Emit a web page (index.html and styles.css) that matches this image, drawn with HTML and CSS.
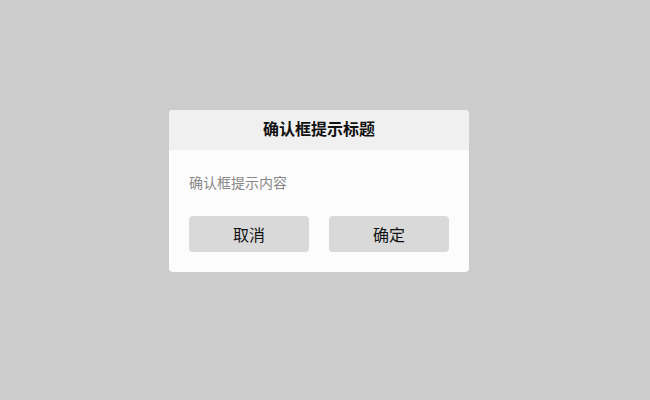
FILE: index.html
```html
<!DOCTYPE html>
<html lang="zh">
<head>
<meta charset="utf-8">
<link rel="stylesheet" href="styles.css">
</head>
<body>
<div class="overlay">
  <div class="dialog">
    <div class="dialog-header">确认框提示标题</div>
    <div class="dialog-body">
      <div class="dialog-content">确认框提示内容</div>
      <div class="dialog-actions">
        <button class="btn">取消</button>
        <button class="btn">确定</button>
      </div>
    </div>
  </div>
</div>
</body>
</html>
```
FILE: styles.css
```css
html, body {
  margin: 0;
  padding: 0;
  height: 100%;
}
body {
  background: #cccccc;
  font-family: "Liberation Sans", "Noto Sans CJK SC", sans-serif;
}
.overlay {
  height: 100%;
  display: flex;
  align-items: center;
  justify-content: center;
}
.dialog {
  width: 300px;
  background: #fcfcfc;
  border-radius: 4px;
  overflow: hidden;
  margin-right: 12px;
  margin-bottom: 18px;
}
.dialog-header {
  height: 40px;
  line-height: 40px;
  background: #f0f0f0;
  text-align: center;
  font-size: 16px;
  font-weight: bold;
  color: #111;
}
.dialog-body {
  padding: 20px;
}
.dialog-content {
  font-size: 14px;
  line-height: 26px;
  color: #888;
}
.dialog-actions {
  display: flex;
  gap: 20px;
  margin-top: 20px;
}
.btn {
  flex: 1;
  height: 36px;
  border: none;
  border-radius: 4px;
  background: #d9d9d9;
  font-family: inherit;
  font-size: 16px;
  color: #111;
  padding: 0;
}
```
